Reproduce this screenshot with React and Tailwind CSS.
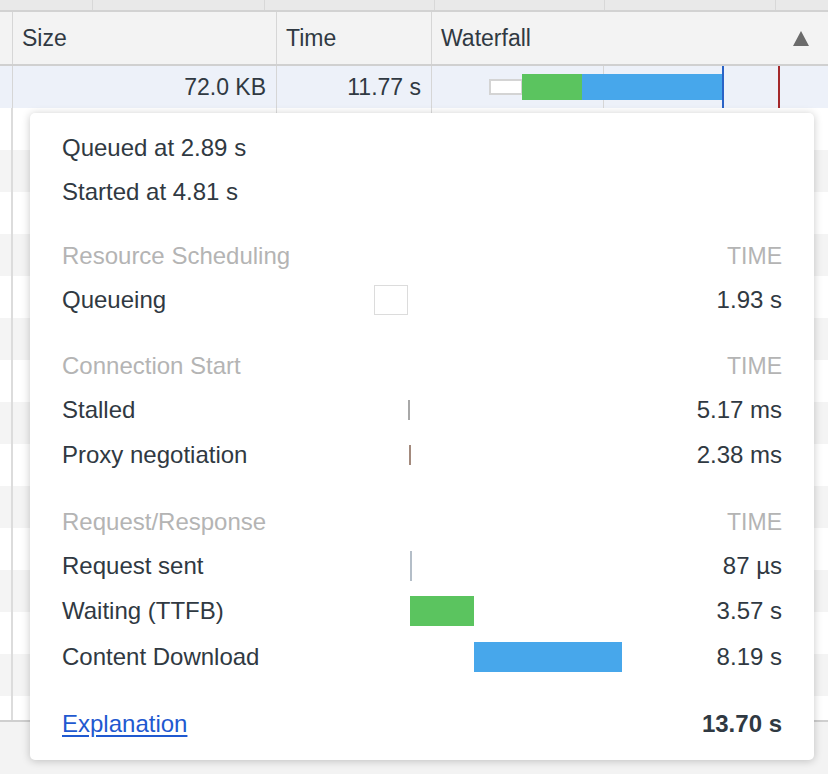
import React from 'react';

const font = { fontFamily: '"Liberation Sans", Arial, sans-serif' };

const sections = [
  {
    title: 'Resource Scheduling',
    rows: [
      { label: 'Queueing', value: '1.93 s', h: 'h-[44px]', bar: <div className="ml-0 w-[34px] h-[30px] bg-white border border-[#dcdcdc]" /> },
    ],
  },
  {
    title: 'Connection Start',
    rows: [
      { label: 'Stalled', value: '5.17 ms', h: 'h-[44px]', bar: <div className="ml-[34px] w-[2px] h-[20px] bg-[#a8a8a8]" /> },
      { label: 'Proxy negotiation', value: '2.38 ms', h: 'h-[46px]', bar: <div className="ml-[35px] w-[2px] h-[20px] bg-[#a38a7d]" /> },
    ],
  },
  {
    title: 'Request/Response',
    rows: [
      { label: 'Request sent', value: '87 µs', h: 'h-[44px]', bar: <div className="ml-[36px] w-[2px] h-[30px] bg-[#b4bec8]" /> },
      { label: 'Waiting (TTFB)', value: '3.57 s', h: 'h-[46px]', bar: <div className="ml-[36px] w-[64px] h-[30px] bg-[#5bc45f]" /> },
      { label: 'Content Download', value: '8.19 s', h: 'h-[46px]', bar: <div className="ml-[100px] w-[148px] h-[30px] bg-[#47a7eb]" /> },
    ],
  },
];

const Row = ({ label, value, h, bar }) => (
  <div className={`grid grid-cols-[312px_248px_1fr] items-center ${h}`}>
    <span>{label}</span>
    <div className="flex items-center">{bar}</div>
    <span className="text-right">{value}</span>
  </div>
);

const TopStrip = () => (
  <div className="flex h-[12px] bg-[#e9e9e9] border-b-2 border-[#d2d2d2]">
    <div className="w-[93px] border-r border-[#d8d8d8]" />
    <div className="w-[172px] border-r border-[#d8d8d8]" />
    <div className="w-[170px] border-r border-[#d8d8d8]" />
    <div className="w-[170px] border-r border-[#d8d8d8]" />
    <div className="w-[171px] border-r border-[#d8d8d8]" />
    <div className="flex-1" />
  </div>
);

export default function App() {
  const stripes = Array.from({ length: 15 }, (_, i) => i);

  return (
    <div style={font} className="relative w-[828px] h-[774px] overflow-hidden bg-[#f3f3f3] text-[#303942]">
      <TopStrip />

      {/* header */}
      <div className="flex h-[54px] bg-[#f3f3f3] border-b-2 border-[#d0d0d0] text-[23px]">
        <div className="w-[13px] border-r border-[#d6d6d6]" />
        <div className="w-[264px] border-r border-[#d6d6d6] flex items-center pl-[9px]">Size</div>
        <div className="w-[155px] border-r border-[#d6d6d6] flex items-center pl-[9px]">Time</div>
        <div className="flex-1 flex items-center justify-between pl-[9px] pr-[19px]">
          <span>Waterfall</span>
          <svg width="16" height="15" viewBox="0 0 16 15">
            <path d="M8 0 L16 15 L0 15 Z" fill="#6b6b6b" />
          </svg>
        </div>
      </div>

      {/* selected row */}
      <div className="flex h-[42px] bg-[#edf1f9] text-[23px]">
        <div className="w-[13px] border-r border-[#d6d6d6]" />
        <div className="w-[264px] border-r border-[#d6d6d6] flex items-center justify-end pr-[10px]">72.0 KB</div>
        <div className="w-[155px] border-r border-[#d6d6d6] flex items-center justify-end pr-[10px]">11.77 s</div>
        <div className="relative flex-1 flex items-center">
          <div className="w-[172px] h-full border-r border-[#d6d6d6]" />
          <div className="absolute left-[57px] top-[13px] w-[34px] h-[16px] bg-white border-2 border-[#d4d4d4]" />
          <div className="absolute left-[90px] top-[8px] w-[60px] h-[26px] bg-[#5bc45f]" />
          <div className="absolute left-[150px] top-[8px] w-[141px] h-[26px] bg-[#47a7eb]" />
          <div className="absolute left-[290px] top-0 w-[2px] h-full bg-[#2a63c6]" />
          <div className="absolute left-[346px] top-0 w-[2px] h-full bg-[#a4282b]" />
        </div>
      </div>

      {/* striped rows */}
      <div className="h-[614px] overflow-hidden border-b-2 border-[#cfcfcf]">
        {stripes.map((i) => (
          <div key={i} className={`flex h-[42px] ${i % 2 === 0 ? 'bg-white' : 'bg-[#f4f4f4]'}`}>
            <div className="w-[13px] border-r-2 border-[#dcdcdc]" />
            <div className="w-[264px] border-r border-[#dcdcdc]" />
            <div className="w-[155px] border-r border-[#dcdcdc]" />
            <div className="flex-1" />
          </div>
        ))}
      </div>

      {/* timing popover */}
      <div className="absolute left-[30px] top-[113px] w-[784px] h-[647px] bg-white rounded-[5px] shadow-[0_1px_8px_rgba(0,0,0,0.22)] px-[32px] pt-[13px] text-[24px]">
        <div className="flex items-center h-[44px]">Queued at 2.89 s</div>
        <div className="flex items-center h-[44px]">Started at 4.81 s</div>

        {sections.map((s, idx) => (
          <div key={s.title} className={idx === 0 ? 'mt-[20px]' : 'mt-[22px]'}>
            <div className="flex items-center justify-between h-[44px] text-[#b4b4b4]">
              <span>{s.title}</span>
              <span className="text-[23px]">TIME</span>
            </div>
            {s.rows.map((r) => (
              <Row key={r.label} {...r} />
            ))}
          </div>
        ))}

        <div className="mt-[22px] flex items-center justify-between h-[44px]">
          <a href="#" className="text-[#1f59d0] underline underline-offset-[3px]">Explanation</a>
          <span className="font-bold">13.70 s</span>
        </div>
      </div>
    </div>
  );
}
